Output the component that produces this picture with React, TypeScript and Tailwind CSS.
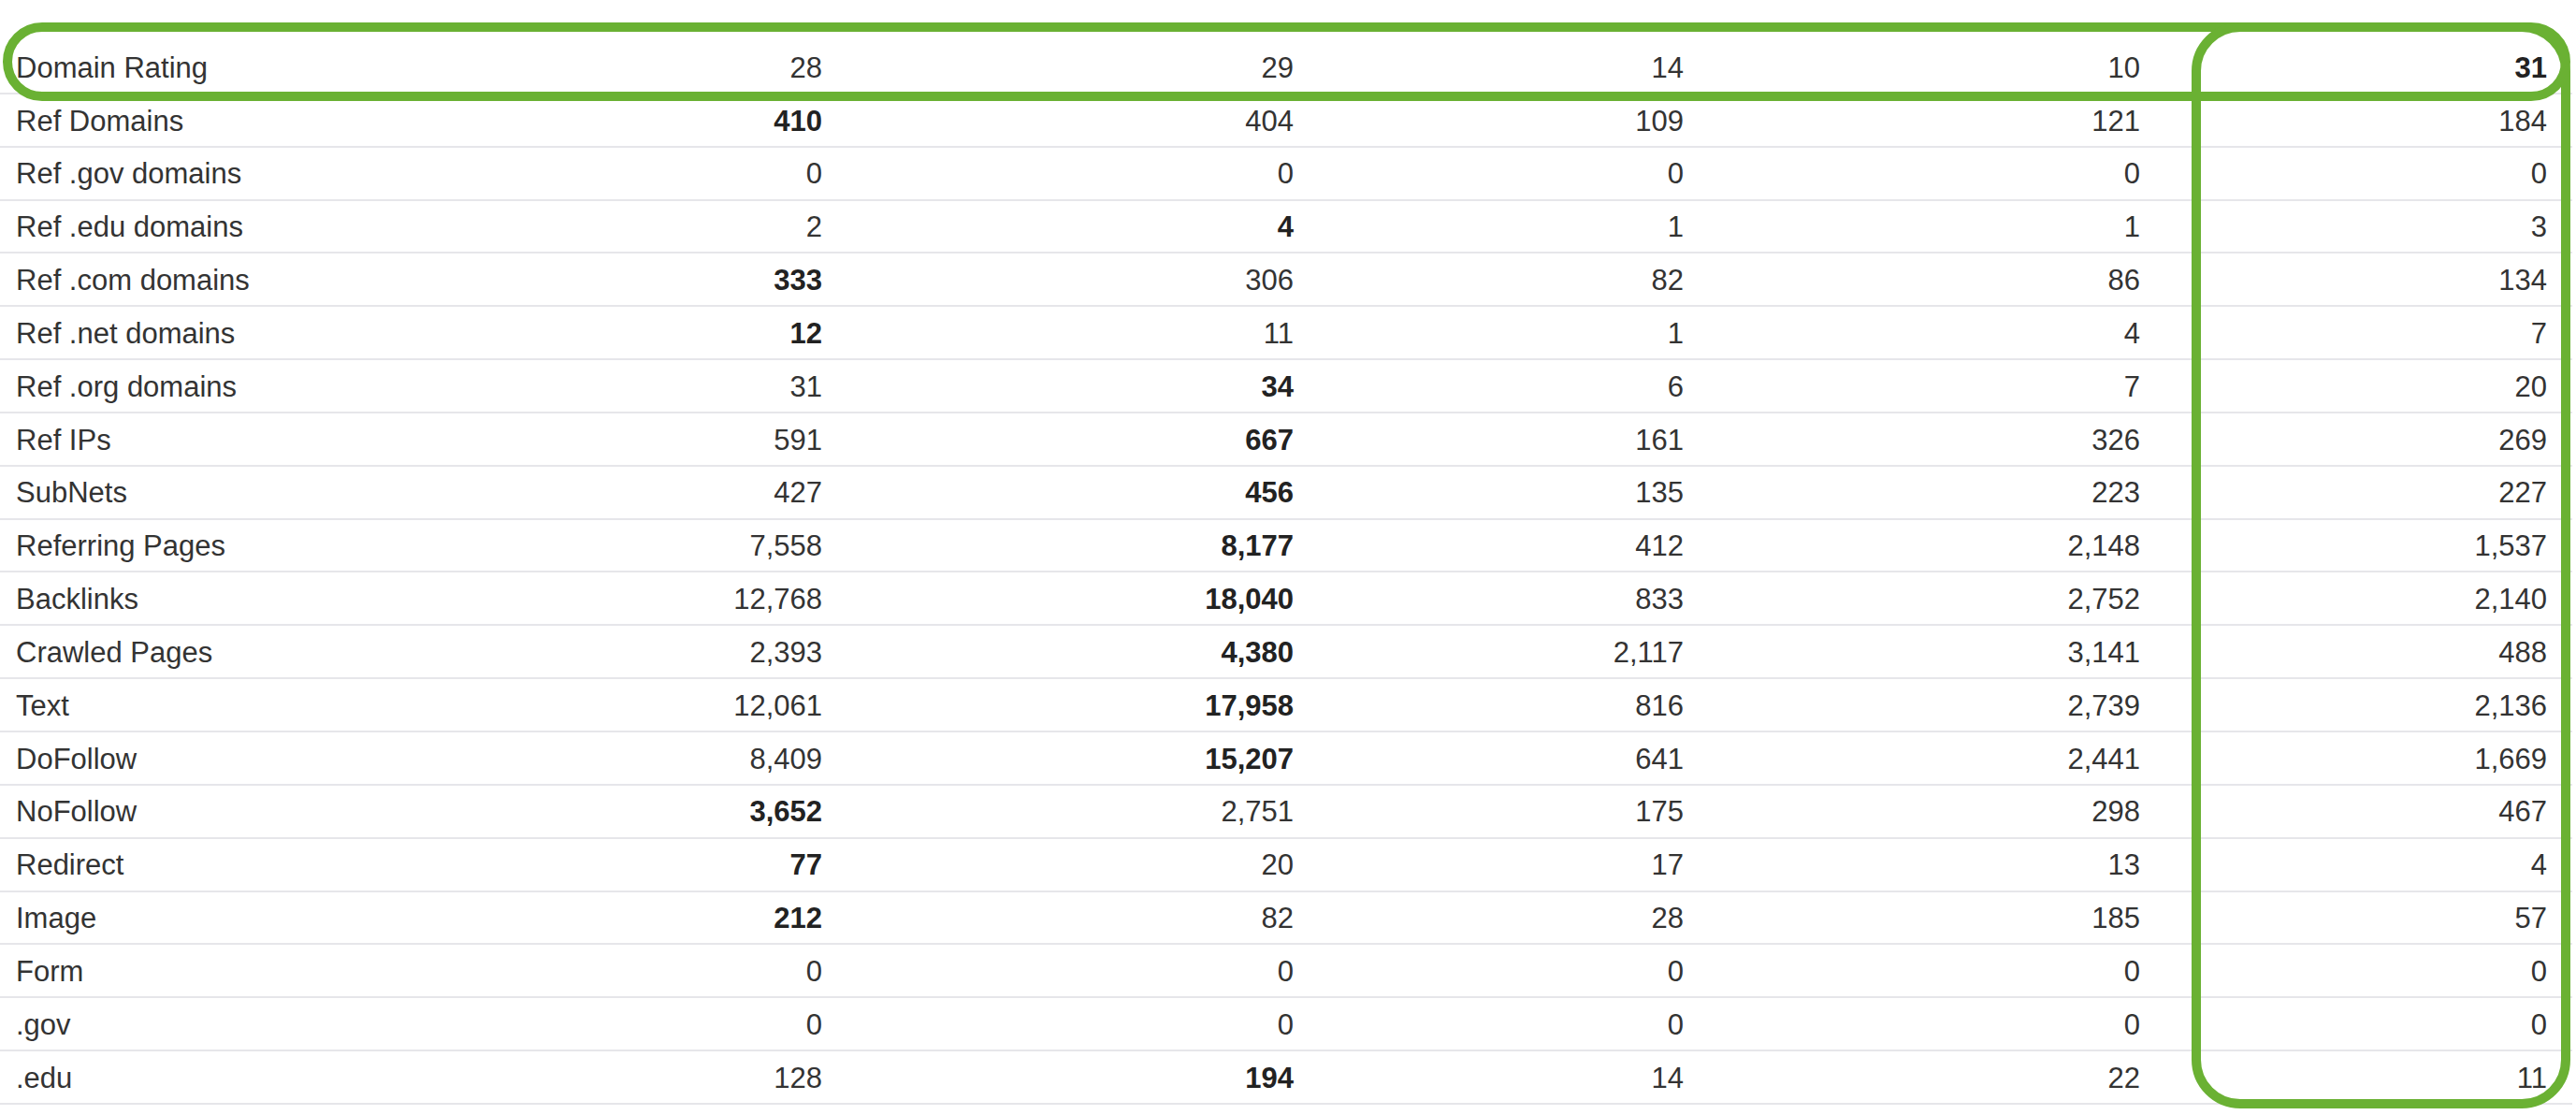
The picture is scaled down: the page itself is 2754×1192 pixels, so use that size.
import React from "react";

interface MetricRow {
  label: string;
  values: string[];
  best: number; // index of the bolded value, -1 for none
}

const rows: MetricRow[] = [
  { label: "Domain Rating", values: ["28", "29", "14", "10", "31"], best: 4 },
  { label: "Ref Domains", values: ["410", "404", "109", "121", "184"], best: 0 },
  { label: "Ref .gov domains", values: ["0", "0", "0", "0", "0"], best: -1 },
  { label: "Ref .edu domains", values: ["2", "4", "1", "1", "3"], best: 1 },
  { label: "Ref .com domains", values: ["333", "306", "82", "86", "134"], best: 0 },
  { label: "Ref .net domains", values: ["12", "11", "1", "4", "7"], best: 0 },
  { label: "Ref .org domains", values: ["31", "34", "6", "7", "20"], best: 1 },
  { label: "Ref IPs", values: ["591", "667", "161", "326", "269"], best: 1 },
  { label: "SubNets", values: ["427", "456", "135", "223", "227"], best: 1 },
  { label: "Referring Pages", values: ["7,558", "8,177", "412", "2,148", "1,537"], best: 1 },
  { label: "Backlinks", values: ["12,768", "18,040", "833", "2,752", "2,140"], best: 1 },
  { label: "Crawled Pages", values: ["2,393", "4,380", "2,117", "3,141", "488"], best: 1 },
  { label: "Text", values: ["12,061", "17,958", "816", "2,739", "2,136"], best: 1 },
  { label: "DoFollow", values: ["8,409", "15,207", "641", "2,441", "1,669"], best: 1 },
  { label: "NoFollow", values: ["3,652", "2,751", "175", "298", "467"], best: 0 },
  { label: "Redirect", values: ["77", "20", "17", "13", "4"], best: 0 },
  { label: "Image", values: ["212", "82", "28", "185", "57"], best: 0 },
  { label: "Form", values: ["0", "0", "0", "0", "0"], best: -1 },
  { label: ".gov", values: ["0", "0", "0", "0", "0"], best: -1 },
  { label: ".edu", values: ["128", "194", "14", "22", "11"], best: 1 },
];

export default function App() {
  return (
    <div className="relative w-[2754px] h-[1192px] bg-white text-[#333] font-['Liberation_Sans',Helvetica,Arial,sans-serif] text-[31px]">
      <div className="pt-[44px] w-[2750px]">
        {rows.map((row) => (
          <div
            key={row.label}
            className="grid grid-cols-[500px_393px_504px_417px_488px_435px] h-[56.85px] pt-[3px] items-center border-b-2 border-[#e6e6ea]"
          >
            <div className="pl-[17px] whitespace-nowrap">{row.label}</div>
            {row.values.map((v, i) => (
              <div
                key={i}
                className={`pr-[14px] text-right ${i === row.best ? "font-bold text-[#222]" : ""}`}
              >
                {v}
              </div>
            ))}
          </div>
        ))}
      </div>

      {/* highlight outlines */}
      <div className="absolute left-[3px] top-[24px] w-[2745px] h-[84px] border-[10px] border-[#6ab133] rounded-[42px] pointer-events-none" />
      <div className="absolute left-[2343px] top-[24px] w-[405px] h-[1161px] border-[10px] border-[#6ab133] rounded-[52px] pointer-events-none" />
    </div>
  );
}
